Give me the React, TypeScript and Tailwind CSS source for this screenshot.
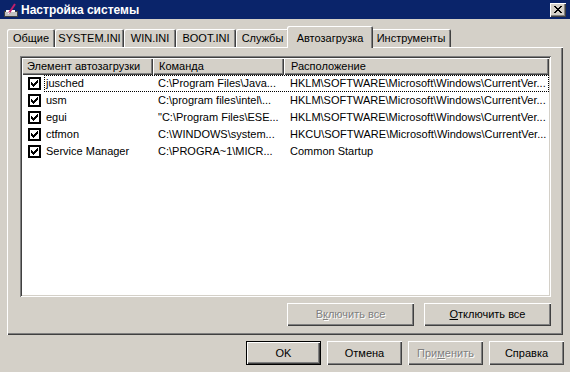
import React from 'react';

const RAISED = 'shadow-[inset_1px_1px_#ffffff,inset_-1px_-1px_#404040,inset_-2px_-2px_#808080]';

type Row = { name: string; cmd: string; loc: string };

const ROWS: Row[] = [
  { name: 'jusched', cmd: 'C:\\Program Files\\Java...', loc: 'HKLM\\SOFTWARE\\Microsoft\\Windows\\CurrentVer...' },
  { name: 'usm', cmd: 'C:\\program files\\intel\\...', loc: 'HKLM\\SOFTWARE\\Microsoft\\Windows\\CurrentVer...' },
  { name: 'egui', cmd: '"C:\\Program Files\\ESE...', loc: 'HKLM\\SOFTWARE\\Microsoft\\Windows\\CurrentVer...' },
  { name: 'ctfmon', cmd: 'C:\\WINDOWS\\system...', loc: 'HKCU\\SOFTWARE\\Microsoft\\Windows\\CurrentVer...' },
  { name: 'Service Manager', cmd: 'C:\\PROGRA~1\\MICR...', loc: 'Common Startup' },
];

const TABS: { label: string; w: string; active?: boolean }[] = [
  { label: 'Общие', w: 'w-[48px]' },
  { label: 'SYSTEM.INI', w: 'w-[69px]' },
  { label: 'WIN.INI', w: 'w-[52px]' },
  { label: 'BOOT.INI', w: 'w-[60px]' },
  { label: 'Службы', w: 'w-[53px]' },
  { label: 'Автозагрузка', w: 'w-[86px]', active: true },
  { label: 'Инструменты', w: 'w-[80px]' },
];

const Check = () => (
  <div className="w-[13px] h-[13px] border-2 border-black bg-white flex items-center justify-center shrink-0">
    <svg width="7" height="7" viewBox="0 0 7 7" shapeRendering="crispEdges">
      <path
        d="M0 2h1v3H0z M1 3h1v3H1z M2 4h1v3H2z M3 3h1v3H3z M4 2h1v3H4z M5 1h1v3H5z M6 0h1v3H6z"
        fill="#000"
      />
    </svg>
  </div>
);

const Btn = ({ children, w, h, disabled, def }: { children: React.ReactNode; w: string; h: string; disabled?: boolean; def?: boolean }) => (
  <div
    className={`${w} ${h} flex items-center justify-center bg-[#d4d0c8] ${def ? 'border border-black' : ''} ${RAISED} ${
      disabled ? 'text-[#808080] [text-shadow:1px_1px_0_#ffffff]' : 'text-black'
    }`}
  >
    {children}
  </div>
);

export default function App() {
  return (
    <div className="w-[570px] h-[372px] bg-[#d4d0c8] flex flex-col overflow-hidden font-['Liberation_Sans',Arial,sans-serif] text-[11px] text-black select-none">
      {/* Title bar */}
      <div className="h-[19px] bg-[#0a246a] flex items-center pl-[3px] pr-[4px]">
        <svg width="16" height="16" viewBox="0 0 16 16" className="shrink-0">
          <rect x="1.5" y="9.5" width="13" height="5" fill="#c0c0c0" stroke="#404040" />
          <rect x="3" y="8" width="9" height="2" fill="#ffffff" />
          <path d="M6 11 L12 2" stroke="#c0206a" strokeWidth="2" />
          <path d="M5 12 L6.5 10" stroke="#ffffff" strokeWidth="1" />
        </svg>
        <span className="ml-[2px] flex-1 text-white font-bold text-[12px] leading-none">Настройка системы</span>
        <div className={`w-[16px] h-[14px] bg-[#d4d0c8] flex items-center justify-center ${RAISED}`}>
          <svg width="8" height="7" viewBox="0 0 8 7" shapeRendering="crispEdges">
            <path d="M0 0h2v1H0z M6 0h2v1H6z M1 1h2v1H1z M5 1h2v1H5z M2 2h4v1H2z M3 3h2v1H3z M2 4h4v1H2z M1 5h2v1H1z M5 5h2v1H5z M0 6h2v1H0z M6 6h2v1H6z" fill="#000" />
          </svg>
        </div>
      </div>

      {/* Tabs */}
      <div className="mt-[7px] ml-[7px] h-[21px] flex items-end">
        {TABS.map((t) =>
          t.active ? (
            <div
              key={t.label}
              className={`${t.w} -mx-[2px] relative top-[1px] z-10 h-[22px] bg-[#d4d0c8] rounded-t-[2px] flex items-start justify-center pt-[4px] shadow-[inset_1px_1px_#ffffff,inset_-1px_0_#404040,inset_-2px_0_#808080]`}
            >
              {t.label}
            </div>
          ) : (
            <div
              key={t.label}
              className={`${t.w} h-[18px] bg-[#d4d0c8] rounded-t-[2px] flex items-center justify-center shadow-[inset_1px_1px_#ffffff,inset_-1px_0_#404040,inset_-2px_0_#808080]`}
            >
              {t.label}
            </div>
          )
        )}
      </div>

      {/* Panel */}
      <div className={`ml-[7px] w-[556px] h-[288px] flex flex-col pt-[9px] pl-[13px] pr-[12px] ${RAISED}`}>
        <div className="h-[241px] p-[2px] bg-white shadow-[inset_1px_1px_#808080,inset_-1px_-1px_#ffffff,inset_2px_2px_#404040,inset_-2px_-2px_#d4d0c8]">
          <div className="flex h-[17px] bg-[#d4d0c8]">
            <div className={`w-[131px] flex items-center pl-[5px] ${RAISED}`}>Элемент автозагрузки</div>
            <div className={`w-[131px] flex items-center pl-[6px] ${RAISED}`}>Команда</div>
            <div className={`flex-1 flex items-center pl-[7px] ${RAISED}`}>Расположение</div>
          </div>
          {ROWS.map((r, i) => (
            <div key={r.name} className="flex h-[17px] items-center">
              <div className="w-[22px] pl-[6px] flex items-center">
                <Check />
              </div>
              <div className={`flex-1 h-full flex items-center ${i === 0 ? 'border border-dotted border-black' : 'border border-transparent'}`}>
                <div className="w-[108px] pl-[1px] whitespace-pre overflow-hidden">{r.name}</div>
                <div className="w-[131px] pl-[5px] whitespace-pre overflow-hidden">{r.cmd}</div>
                <div className="flex-1 pl-[6px] whitespace-pre overflow-hidden">{r.loc}</div>
              </div>
            </div>
          ))}
        </div>
        <div className="mt-[6px] flex justify-end gap-[10px]">
          <Btn w="w-[127px]" h="h-[23px]" disabled>
            <span>
              В<span className="underline">к</span>лючить все
            </span>
          </Btn>
          <Btn w="w-[127px]" h="h-[23px]">
            <span>
              <span className="underline">О</span>тключить все
            </span>
          </Btn>
        </div>
      </div>

      {/* Dialog buttons */}
      <div className="mt-[6px] pr-[6px] flex justify-end gap-[6px]">
        <Btn w="w-[75px]" h="h-[24px]" def>
          OK
        </Btn>
        <Btn w="w-[75px]" h="h-[24px]">Отмена</Btn>
        <Btn w="w-[75px]" h="h-[24px]" disabled>
          <span>
            При<span className="underline">м</span>енить
          </span>
        </Btn>
        <Btn w="w-[75px]" h="h-[24px]">Справка</Btn>
      </div>
    </div>
  );
}
